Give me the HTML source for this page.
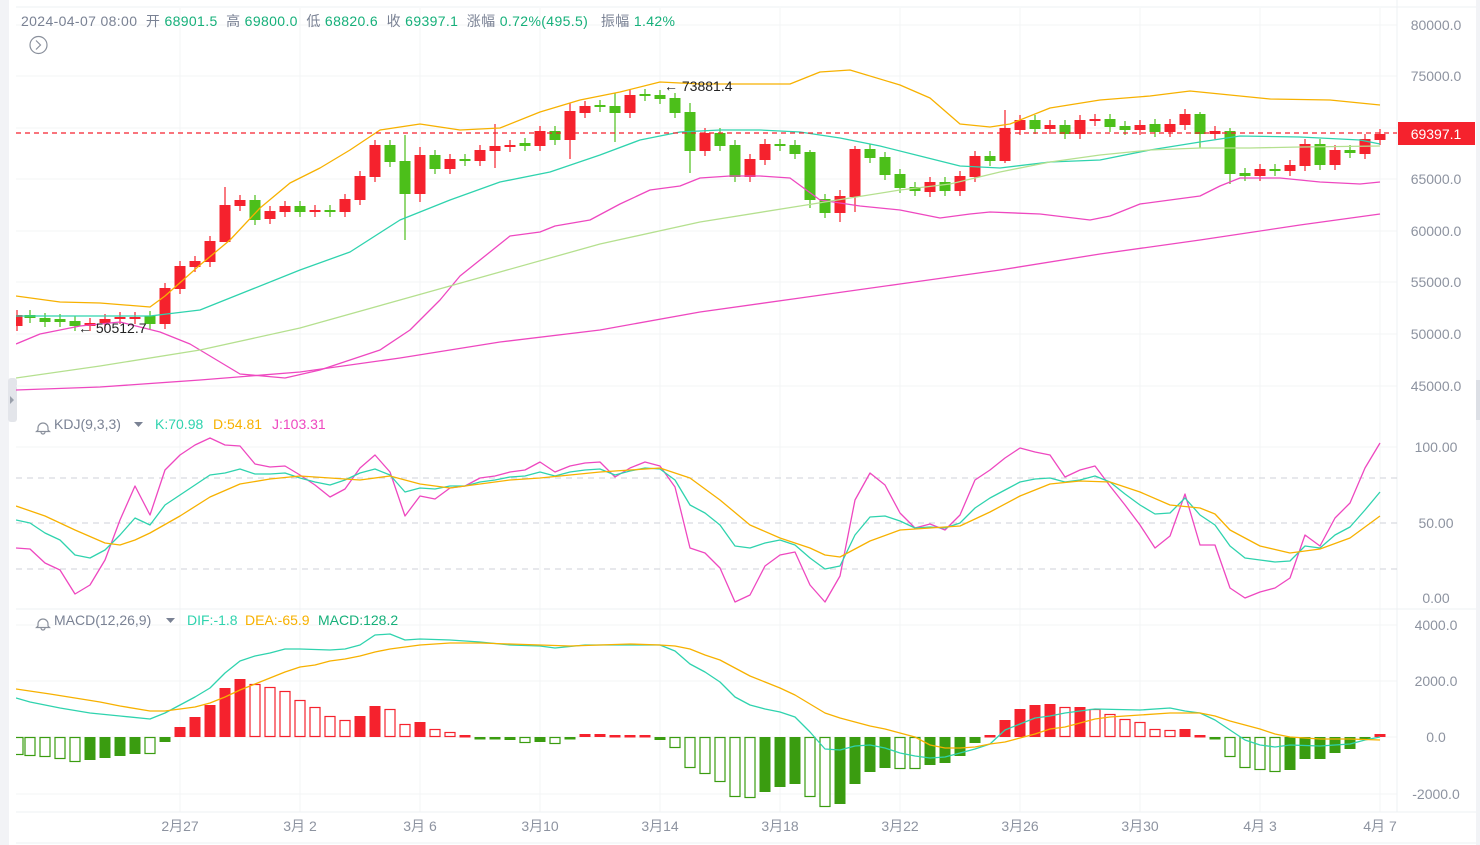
<!DOCTYPE html>
<html><head><meta charset="utf-8"><style>
html,body{margin:0;padding:0;background:#fff;width:1480px;height:845px;overflow:hidden}
svg{display:block}
text{font-family:"Liberation Sans","Noto Sans CJK SC",sans-serif}
</style></head><body>
<svg id="s" width="1480" height="845" xmlns="http://www.w3.org/2000/svg">
<defs><clipPath id="cp"><rect x="16" y="0" width="1381" height="845"/></clipPath></defs>
<rect x="0" y="0" width="1480" height="845" fill="#fff"/>
<rect x="0" y="0" width="9" height="845" fill="#f2f3f6"/>
<rect x="8" y="378" width="9" height="44" rx="3" fill="#e3e5ea"/>
<polygon points="10,396 14,400 10,404" fill="#9aa0ab"/>
<rect x="1476" y="0" width="4" height="845" fill="#f2f3f6"/>
<rect x="1476" y="380" width="4" height="40" fill="#dcdfe5"/>
<g id="grid" stroke="#f3f4f6" stroke-width="1"></g>
<line x1="1397" y1="0" x2="1397" y2="812" stroke="#eef0f3"/>
<line x1="16" y1="7" x2="1476" y2="7" stroke="#eef0f3"/>
<line x1="16" y1="609" x2="1476" y2="609" stroke="#eef0f3"/>
<line x1="16" y1="812" x2="1476" y2="812" stroke="#eef0f3"/>
<line x1="16" y1="843" x2="1476" y2="843" stroke="#eef0f3"/>
<g clip-path="url(#cp)">
<g id="main"></g>
<g id="kdj"></g>
<g id="macd"></g>
</g>
<g id="tag"></g>
<g id="labels" font-size="14" fill="#8d93a0" text-anchor="middle"></g>
<text x="21" y="26" font-size="14" fill="#7a8294" textLength="654" lengthAdjust="spacing" xml:space="preserve">2024-04-07 08:00  开 <tspan fill="#16b07a">68901.5</tspan>  高 <tspan fill="#16b07a">69800.0</tspan>  低 <tspan fill="#16b07a">68820.6</tspan>  收 <tspan fill="#16b07a">69397.1</tspan>  涨幅 <tspan fill="#16b07a">0.72%(495.5)</tspan>   振幅 <tspan fill="#16b07a">1.42%</tspan></text>
<circle cx="38.5" cy="45" r="8.5" fill="none" stroke="#8a909c" stroke-width="1.2"/>
<polyline points="36,40.5 40.5,45 36,49.5" fill="none" stroke="#8a909c" stroke-width="1.2"/>
<g fill="none" stroke="#8a909c" stroke-width="1.2">
<path d="M38,430 v-2 a5,5 0 0 1 5,-5 a5,5 0 0 1 5,5 v2 l1.5,1.5 h-13 z M41,432 a2,2 0 0 0 4,0"/>
<path d="M38,626 v-2 a5,5 0 0 1 5,-5 a5,5 0 0 1 5,5 v2 l1.5,1.5 h-13 z M41,628 a2,2 0 0 0 4,0"/>
</g>
<text x="54" y="429" font-size="14" fill="#7a8294">KDJ(9,3,3)</text>
<polygon points="134,422 143,422 138.5,427" fill="#7a8294"/>
<text x="155" y="429" font-size="14" fill="#2fd3ae">K:70.98</text>
<text x="213" y="429" font-size="14" fill="#f7b100">D:54.81</text>
<text x="272" y="429" font-size="14" fill="#ee48c0">J:103.31</text>
<text x="54" y="625" font-size="14" fill="#7a8294">MACD(12,26,9)</text>
<polygon points="166,618 175,618 170.5,623" fill="#7a8294"/>
<text x="187" y="625" font-size="14" fill="#2fd3ae">DIF:-1.8</text>
<text x="245" y="625" font-size="14" fill="#f7b100">DEA:-65.9</text>
<text x="318" y="625" font-size="14" fill="#16b07a">MACD:128.2</text>
</svg>
<script>
const NS="http://www.w3.org/2000/svg";
function el(p,t,a,txt){const e=document.createElementNS(NS,t);for(const k in a)e.setAttribute(k,a[k]);if(txt!=null)e.textContent=txt;document.getElementById(p).appendChild(e);return e;}
const R="#f5222d",G="#4cbf1a",GM="#3a9c10";
[25,76,128,179,231,282,334,386,447,609,625,681,737,794].forEach(y=>el("grid","line",{x1:16,y1:y,x2:1397,y2:y}));
for(let x=180;x<=1380;x+=120)el("grid","line",{x1:x,y1:8,x2:x,y2:812});
const pl=[["80000.0",25],["75000.0",76],["65000.0",179],["60000.0",231],["55000.0",282],["50000.0",334],["45000.0",386],["100.00",447],["50.00",523],["0.00",598],["4000.0",625],["2000.0",681],["0.0",737],["-2000.0",794]];
pl.forEach(([t,y])=>el("labels","text",{x:1436,y:y+5},t));
const dl=["2月27","3月 2","3月 6","3月10","3月14","3月18","3月22","3月26","3月30","4月 3","4月 7"];
dl.forEach((t,i)=>{const e=el("labels","text",{x:180+120*i,y:831},t);e.setAttribute("xml:space","preserve");});
const C=[[17,315,326,1],[30,315,318,0],[45,318,322,0],[60,319,322,0],[75,321,326,0],[90,323,326,1],[105,319,323,1],[120,317,319,1],[135,317,319,1],[150,316,324,0],[165,288,324,1],[180,266,289,1],[195,261,267,1],[210,241,262,1],[225,205,242,1],[240,200,206,1],[255,200,220,0],[270,211,219,1],[285,206,212,1],[300,206,212,0],[315,210,212,1],[330,210,212,0],[345,199,212,1],[360,176,200,1],[375,145,177,1],[390,145,162,0],[405,161,194,0],[420,155,194,1],[435,155,169,0],[450,159,169,1],[465,159,161,0],[480,150,161,1],[495,146,151,1],[510,145,147,1],[525,143,146,0],[540,131,146,1],[555,131,140,0],[570,111,140,1],[585,106,113,1],[600,105,107,0],[615,106,113,0],[630,95,113,1],[645,94,96,0],[660,95,99,0],[675,98,113,0],[690,112,151,0],[705,133,151,1],[720,133,146,0],[735,145,177,0],[750,159,177,1],[765,144,160,1],[780,144,146,0],[795,145,154,0],[810,152,200,0],[825,199,213,0],[840,196,213,1],[855,149,197,1],[870,149,158,0],[885,157,175,0],[900,174,188,0],[915,187,191,0],[930,182,192,1],[945,182,191,0],[960,176,191,1],[975,156,177,1],[990,156,161,0],[1005,128,161,1],[1020,120,130,1],[1035,120,129,0],[1050,125,129,1],[1065,125,134,0],[1080,120,134,1],[1095,119,121,1],[1110,119,127,0],[1125,126,130,0],[1140,125,130,1],[1155,124,132,0],[1170,124,132,1],[1185,114,125,1],[1200,114,134,0],[1215,131,134,1],[1230,131,174,0],[1245,173,176,0],[1260,169,176,1],[1275,169,171,0],[1290,165,171,1],[1305,144,166,1],[1320,144,165,0],[1335,150,165,1],[1350,150,153,0],[1365,139,154,1],[1380,134,140,1]];
const wick={225:[187,242],405:[135,240],495:[124,168],570:[103,159],615:[93,142],420:[147,202],690:[103,173],855:[146,212],1230:[128,184],1005:[110,163],1200:[112,148],840:[190,222],810:[150,208]};
C.forEach(([x,t,b,r])=>{const c=r?R:G;let w=wick[x]||[t-5,b+5];el("main","line",{x1:x,y1:w[0],x2:x,y2:w[1],stroke:c,"stroke-width":1.2});el("main","rect",{x:x-5.5,y:t,width:11,height:Math.max(b-t,1.5),fill:c});});
function line(g,pts,c,w){el(g,"polyline",{points:pts.map(p=>p.join(",")).join(" "),fill:"none",stroke:c,"stroke-width":w||1.3,"stroke-linejoin":"round"});}
line("main",[[16,296],[60,302],[100,303],[150,307],[165,296],[200,265],[230,240],[260,208],[290,183],[320,168],[350,150],[380,130],[420,124],[460,130],[500,128],[540,112],[580,100],[620,92],[660,82],[700,84],[750,84],[790,84],[820,72],[850,70],[900,85],[930,98],[960,124],[990,127],[1010,124],[1050,108],[1100,100],[1150,96],[1190,91],[1230,95],[1270,99],[1330,100],[1380,105]],"#f7b100");
line("main",[[16,316],[150,316],[200,310],[250,290],[300,270],[350,252],[400,220],[450,200],[500,182],[550,172],[600,155],[640,140],[680,132],[720,130],[760,130],[800,132],[840,138],[880,146],[920,156],[960,166],[1000,168],[1050,162],[1100,160],[1150,150],[1200,142],[1240,136],[1300,137],[1360,140],[1380,144]],"#2fd3ae");
line("main",[[16,344],[40,334],[80,326],[120,322],[160,332],[190,344],[210,356],[240,374],[285,378],[320,370],[350,360],[380,350],[410,330],[440,300],[460,276],[490,252],[510,236],[540,232],[555,226],[590,220],[620,204],[650,190],[680,186],[700,178],[730,176],[760,176],[790,178],[820,200],[860,206],[900,210],[940,218],[970,214],[990,212],[1040,214],[1090,220],[1110,216],[1140,204],[1170,200],[1200,196],[1220,186],[1240,178],[1280,178],[1320,182],[1360,184],[1380,182]],"#ee48c0");
line("main",[[16,378],[100,366],[200,350],[300,328],[400,300],[500,272],[600,244],[700,222],[800,206],[850,198],[900,190],[950,184],[1000,172],[1050,162],[1100,155],[1150,150],[1200,148],[1250,148],[1300,147],[1380,146]],"#b5e08f");
line("main",[[16,390],[100,387],[200,380],[300,372],[400,358],[500,342],[600,330],[700,312],[800,298],[900,284],[1000,270],[1100,254],[1200,240],[1300,225],[1380,214]],"#ee48c0");
el("main","line",{x1:16,y1:133,x2:1397,y2:133,stroke:R,"stroke-width":1.2,"stroke-dasharray":"5,4"});
el("tag","rect",{x:1398,y:122,width:77,height:23,fill:R});
el("tag","text",{x:1436,y:139,"font-size":14,fill:"#fff","text-anchor":"middle"},"69397.1");
el("main","text",{x:664,y:91,"font-size":14,fill:"#222"},"← 73881.4");
el("main","text",{x:78,y:333,"font-size":14,fill:"#222"},"← 50512.7");
[478,523,569].forEach(y=>el("kdj","line",{x1:16,y1:y,x2:1397,y2:y,stroke:"#cfd2d8","stroke-dasharray":"6,5"}));
line("kdj",[[16,548],[30,549],[45,563],[60,570],[75,594],[90,585],[105,560],[120,520],[135,486],[150,515],[165,470],[180,455],[195,445],[210,438],[225,445],[240,446],[255,464],[270,467],[285,466],[300,475],[315,485],[330,497],[345,489],[360,468],[375,455],[390,472],[405,516],[420,496],[435,499],[450,488],[465,486],[480,478],[495,476],[510,472],[525,470],[540,462],[555,472],[570,466],[585,463],[600,462],[615,477],[630,468],[645,462],[660,466],[675,487],[690,548],[705,553],[720,568],[735,602],[750,595],[765,566],[780,555],[795,552],[810,585],[825,602],[840,576],[855,500],[870,473],[885,485],[900,513],[915,528],[930,524],[945,530],[960,515],[975,480],[990,470],[1005,458],[1020,448],[1035,452],[1050,455],[1065,477],[1080,470],[1095,466],[1110,486],[1125,505],[1140,525],[1155,548],[1170,536],[1185,494],[1200,545],[1215,545],[1230,588],[1245,598],[1260,592],[1275,588],[1290,578],[1305,535],[1320,546],[1335,518],[1350,503],[1365,468],[1380,443]],"#ee48c0");
line("kdj",[[16,520],[30,523],[45,533],[60,540],[75,555],[90,558],[105,550],[120,535],[135,518],[150,525],[165,505],[180,495],[195,485],[210,475],[225,473],[240,469],[255,474],[270,474],[285,473],[300,478],[315,482],[330,485],[345,480],[360,473],[375,469],[390,475],[405,492],[420,488],[435,489],[450,486],[465,486],[480,482],[495,480],[510,477],[525,476],[540,472],[555,476],[570,472],[585,470],[600,469],[615,475],[630,471],[645,468],[660,469],[675,480],[690,505],[705,513],[720,525],[735,546],[750,548],[765,543],[780,540],[795,545],[810,558],[825,569],[840,566],[855,535],[870,517],[885,516],[900,521],[915,528],[930,527],[945,528],[960,523],[975,508],[990,498],[1005,490],[1020,482],[1035,479],[1050,478],[1065,482],[1080,480],[1095,476],[1110,482],[1125,494],[1140,505],[1155,514],[1170,513],[1185,498],[1200,515],[1215,525],[1230,546],[1245,558],[1260,560],[1275,562],[1290,561],[1305,546],[1320,548],[1335,535],[1350,527],[1365,510],[1380,492]],"#2fd3ae");
line("kdj",[[16,506],[45,516],[75,530],[105,543],[120,545],[135,540],[150,533],[180,516],[210,497],[240,484],[270,479],[300,476],[330,478],[360,480],[390,476],[420,484],[450,488],[480,484],[510,480],[540,478],[570,475],[600,472],[630,470],[660,468],[690,478],[720,500],[750,525],[780,538],[810,548],[825,555],[840,557],[870,541],[900,530],[930,528],[960,526],[990,512],[1020,496],[1050,484],[1080,481],[1110,482],[1140,492],[1170,505],[1200,508],[1215,514],[1230,530],[1260,546],[1290,553],[1320,549],[1350,538],[1380,516]],"#f7b100");
const M=[[18,-18,0],[30,-19,0],[45,-20,0],[60,-22,0],[75,-25,0],[90,-23,1],[105,-21,1],[120,-19,1],[135,-17,1],[150,-17,0],[165,-5,1],[180,10,1],[195,20,1],[210,32,1],[225,49,1],[240,58,1],[255,53,0],[270,50,0],[285,46,0],[300,37,0],[315,30,0],[330,21,0],[345,17,0],[360,21,1],[375,31,1],[390,28,0],[405,13,0],[420,15,1],[435,8,0],[450,5,0],[465,2,1],[480,-2,1],[495,-2,1],[510,-3,0],[525,-6,0],[540,-5,1],[555,-7,0],[570,-2,1],[585,3,1],[600,3,1],[615,2,1],[630,2,1],[645,2,1],[660,-3,1],[675,-11,0],[690,-31,0],[705,-37,0],[720,-45,0],[735,-60,0],[750,-61,0],[765,-55,1],[780,-50,1],[795,-47,1],[810,-60,0],[825,-70,0],[840,-67,1],[855,-47,1],[870,-35,1],[885,-31,1],[900,-32,0],[915,-32,0],[930,-28,1],[945,-26,1],[960,-19,1],[975,-6,1],[990,2,1],[1005,17,1],[1020,28,1],[1035,32,1],[1050,33,1],[1065,30,0],[1080,30,1],[1095,28,0],[1110,23,0],[1125,18,0],[1140,15,0],[1155,8,0],[1170,7,0],[1185,8,1],[1200,2,1],[1215,-2,1],[1230,-20,0],[1245,-31,0],[1260,-33,0],[1275,-35,0],[1290,-33,1],[1305,-22,1],[1320,-22,1],[1335,-16,1],[1350,-12,1],[1365,-3,1],[1380,3,1]];
M.forEach(([x,v,f])=>{const c=v>0?R:GM;const y=v>0?737-v:737;const h=Math.max(Math.abs(v),2.5);
 if(f||Math.abs(v)<4)el("macd","rect",{x:x-5.5,y:y,width:11,height:h,fill:c});
 else el("macd","rect",{x:x-5,y:y+0.5,width:10,height:h-1,fill:"#fff",stroke:c,"stroke-width":1.2});});
line("macd",[[16,698],[30,702],[60,708],[90,713],[120,716],[150,719],[165,713],[180,705],[195,697],[210,688],[225,673],[240,661],[255,656],[270,653],[285,649],[300,649],[330,650],[345,649],[360,645],[375,635],[390,634],[405,640],[420,639],[450,640],[480,642],[510,645],[540,646],[555,648],[585,645],[615,645],[660,645],[675,651],[690,664],[705,672],[720,682],[735,697],[750,705],[765,709],[780,712],[795,717],[810,732],[825,749],[840,750],[855,746],[870,745],[885,748],[900,753],[915,756],[930,758],[945,757],[960,753],[975,749],[990,744],[1005,730],[1020,724],[1035,718],[1050,716],[1065,713],[1080,711],[1095,709],[1140,710],[1170,708],[1185,711],[1200,713],[1215,720],[1230,730],[1245,740],[1260,745],[1275,747],[1290,745],[1320,746],[1350,744],[1365,740],[1380,737]],"#2fd3ae");
line("macd",[[16,689],[50,694],[75,698],[100,702],[120,706],[150,711],[165,711],[180,709],[195,707],[210,703],[225,697],[240,690],[255,684],[270,678],[285,672],[300,667],[315,665],[330,661],[345,659],[360,656],[375,652],[390,649],[405,647],[420,645],[450,643],[480,643],[510,644],[540,645],[570,646],[600,645],[630,644],[660,645],[675,646],[690,649],[705,655],[720,660],[735,668],[750,676],[765,682],[780,688],[795,695],[810,704],[825,713],[840,718],[855,722],[870,726],[885,729],[900,733],[915,737],[930,745],[945,748],[960,748],[975,747],[990,744],[1005,742],[1020,738],[1035,734],[1050,729],[1065,727],[1080,723],[1095,719],[1110,717],[1140,715],[1170,713],[1200,713],[1215,716],[1230,721],[1245,725],[1260,729],[1275,734],[1290,737],[1320,739],[1350,739],[1380,740]],"#f7b100");
</script>
</body></html>
